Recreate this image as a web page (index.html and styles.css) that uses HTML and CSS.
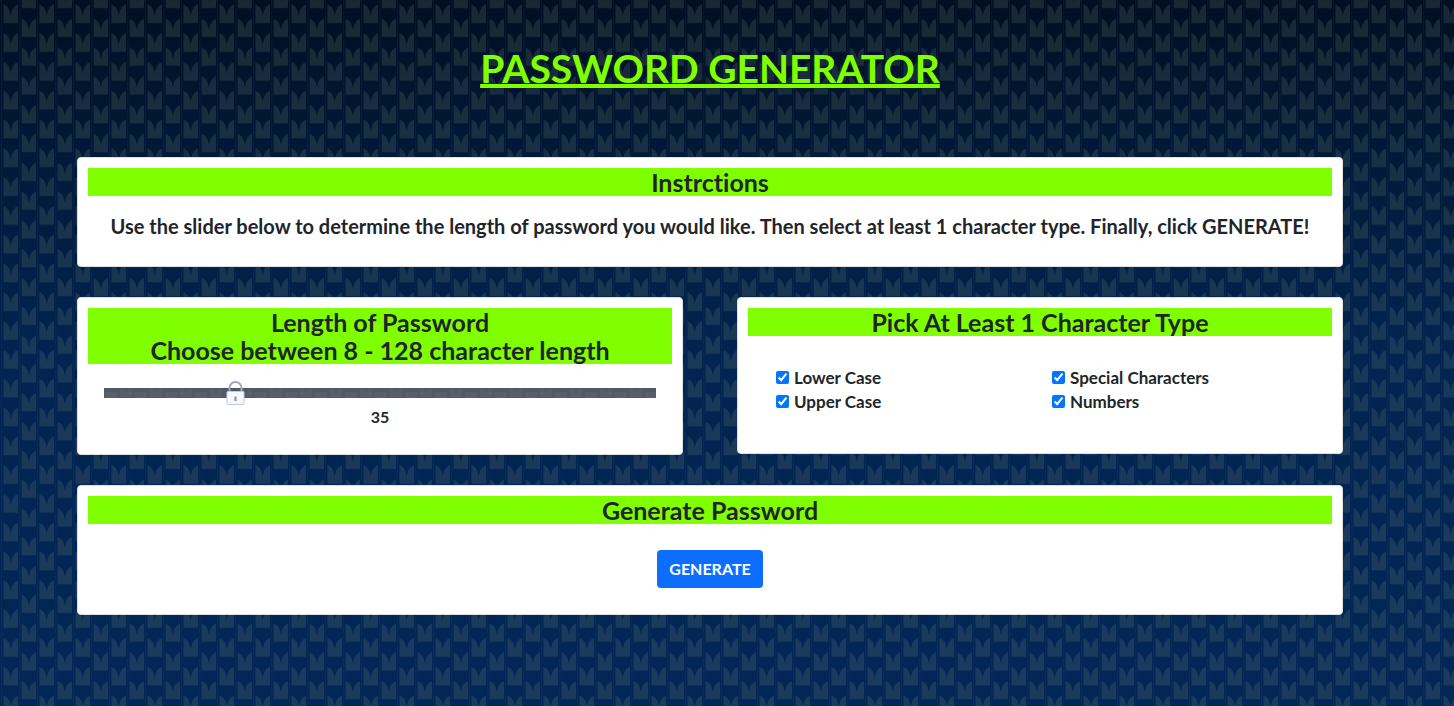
FILE: index.html
```html
<!DOCTYPE html>
<html lang="en">
<head>
<meta charset="utf-8">
<meta name="viewport" content="width=device-width, initial-scale=1">
<title>Password Generator</title>
<link rel="stylesheet" href="styles.css">
</head>
<body>
<svg class="knit" aria-hidden="true">
  <defs>
    <pattern id="stitches" width="36" height="28.8" patternUnits="userSpaceOnUse">
      <g class="stitch">
        <path d="M3.500 4.500C8 6 10 10 10.800 16.500C11.600 10 13.500 6 18 4.500V23H3.500Z"/>
        <path d="M21.700 -9.900C26.200 -8.400 28.200 -4.400 29 2.100C29.800 -4.400 31.700 -8.400 36.200 -9.900V8.300H21.700Z"/>
        <path d="M21.700 18.900C26.200 20.400 28.200 24.400 29 30.900C29.800 24.400 31.700 20.400 36.200 18.900V37.100H21.700Z"/>
      </g>
      <path class="seam" d="M1.500 0V28.800M19.800 0V28.800"/>
    </pattern>
  </defs>
  <rect width="100%" height="100%" fill="url(#stitches)"/>
</svg>
<main class="page">
  <h1 class="title">PASSWORD GENERATOR</h1>
  <section class="card">
    <h2 class="heading">Instrctions</h2>
    <p class="lead">Use the slider below to determine the length of password you would like. Then select at least 1 character type. Finally, click GENERATE!</p>
  </section>
  <div class="row">
    <section class="card">
      <h2 class="heading"><label for="length">Length of Password<br>Choose between 8 - 128 character length</label></h2>
      <div class="slider-box">
        <input class="slider" id="length" type="range" min="8" max="128" value="35">
        <output class="amount" for="length">35</output>
      </div>
    </section>
    <section class="card">
      <h2 class="heading">Pick At Least 1 Character Type</h2>
      <div class="options">
        <label class="option"><input class="tick" type="checkbox" checked>Lower Case</label>
        <label class="option"><input class="tick" type="checkbox" checked>Special Characters</label>
        <label class="option"><input class="tick" type="checkbox" checked>Upper Case</label>
        <label class="option"><input class="tick" type="checkbox" checked>Numbers</label>
      </div>
    </section>
  </div>
  <section class="card">
    <h2 class="heading">Generate Password</h2>
    <div class="action"><button class="generate" type="button">GENERATE</button></div>
  </section>
</main>
</body>
</html>
```
FILE: styles.css
```css
* { box-sizing: border-box; }
body {
  margin: 0;
  min-height: 100vh;
  color: #212529;
  font: 500 16px/24px Lato, "Open Sans", sans-serif;
  font-variant-ligatures: none;
  background: linear-gradient(#000f22, #001b3b 180px, #012450 360px, #022756) no-repeat #022756;
}
.knit { position: absolute; inset: 0; width: 100%; height: 100%; z-index: -1; }
.stitch { fill: rgb(140 150 130 / 18%); }
.seam { fill: none; stroke: rgb(90 130 150 / 7%); }
.page {
  display: flex;
  flex-direction: column;
  gap: 30px;
  padding: 44px 111px 44px 77px;
}
.title {
  margin: 0 0 35px;
  color: #80ff00;
  font-size: 39px;
  line-height: 48px;
  text-align: center;
  text-decoration: underline 4px;
  text-underline-offset: 1px;
  text-decoration-skip-ink: none;
}
.card {
  flex: 1;
  padding: 10px;
  border: 1px solid #dfdfdf;
  border-radius: 4px;
  background: #fff;
}
.row { display: flex; gap: 54px; align-items: flex-start; }
.heading {
  margin: 0;
  background: #80ff00;
  font-size: 25px;
  line-height: 28px;
  font-weight: 700;
  text-align: center;
}
.lead { margin: 0; padding: 18px 0; font-size: 20px; font-weight: 700; text-align: center; }
.slider-box { padding: 16px 16px 15px; }
.slider {
  display: block;
  width: 100%;
  height: 25px;
  margin: 0;
  appearance: none;
  background:
    url("data:image/svg+xml,%3Csvg xmlns='http://www.w3.org/2000/svg' width='30' height='10'%3E%3Cpath d='M16 0q5 1 6 7q1-6 6-7v9h-12zM1 4h12v6h-12z' fill='%23fff' fill-opacity='.04'/%3E%3C/svg%3E") 0 8px / 30px 10px repeat-x,
    linear-gradient(#4f5a67, #4f5a67) center / 100% 10px no-repeat;
}
.slider::-webkit-slider-thumb {
  appearance: none;
  width: 25px;
  height: 25px;
  background: url("data:image/svg+xml,%3Csvg xmlns='http://www.w3.org/2000/svg' viewBox='0 0 25 25'%3E%3Cpath d='M6.500 12V8a6 6 0 0 1 12 0v4' fill='none' stroke='%23a3a8bb' stroke-width='2'/%3E%3Crect x='4' y='11.500' width='17' height='13' rx='1' fill='%23f5f8fc' stroke='%23c3cad8'/%3E%3Cpath d='M11.500 16.500h2v4.500h-2z' fill='%23858ca3'/%3E%3C/svg%3E") center / contain no-repeat;
}
.amount { display: block; font-weight: 700; text-align: center; }
.options {
  display: grid;
  grid-template-columns: 1fr 1fr;
  padding: 30px 4px 29px 28px;
  font-size: 17px;
}
.option { font-weight: 700; }
.tick { width: 13px; height: 13px; margin: 0 5px 0 0; accent-color: #0075ff; }
.action { padding: 26px 26px 16px; text-align: center; }
.generate {
  height: 38px;
  padding: 0 12px;
  border: 0;
  border-radius: 4px;
  color: #fff;
  background: #0d6efd;
  font: 700 16px/24px Lato, "Open Sans", sans-serif;
}
```
